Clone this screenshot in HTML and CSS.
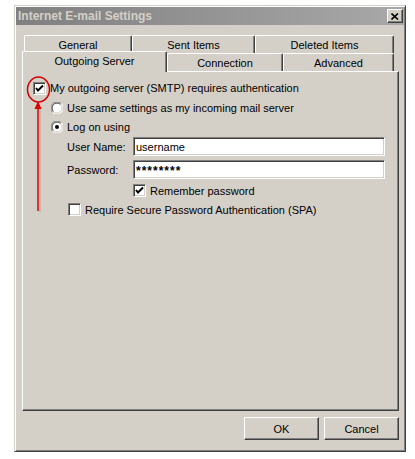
FILE: index.html
```html
<!DOCTYPE html>
<html>
<head>
  <title>Internet E-mail Settings</title>
  <link rel="stylesheet" href="styles.css">
</head>
<body>
  <div class="window">
    <div class="titlebar">
      <span class="title">Internet E-mail Settings</span>
      <span class="close-btn">
        <svg width="8" height="7" viewBox="0 0 8 7"><path d="M0.5 0.5 L7 6.5 M7 0.5 L0.5 6.5" stroke="#000" stroke-width="1.6"/></svg>
      </span>
    </div>

    <div class="dialog-body">
      <div class="tabs">
        <div class="tab-row back">
          <div class="tab tab-general">General</div>
          <div class="tab tab-sent">Sent Items</div>
          <div class="tab tab-deleted">Deleted Items</div>
        </div>
        <div class="tab-row front">
          <div class="tab tab-outgoing active">Outgoing Server</div>
          <div class="tab tab-connection">Connection</div>
          <div class="tab tab-advanced">Advanced</div>
        </div>
      </div>

      <div class="panel">
        <div class="row row-main">
          <span class="checkbox checked">
            <svg width="9" height="9" viewBox="0 0 9 9"><path d="M1 4 L3 6.5 L8 1.5" fill="none" stroke="#000" stroke-width="2"/></svg>
          </span>
          <span class="label">My outgoing server (SMTP) requires authentication</span>
        </div>

        <div class="row row-radio">
          <span class="radio">
            <svg width="12" height="12" viewBox="0 0 12 12">
              <circle cx="6" cy="6" r="5.5" fill="#fff"/>
              <path d="M1.6 10.4 A5.5 5.5 0 0 1 10.4 1.6" fill="none" stroke="#808080"/>
              <path d="M10.4 1.6 A5.5 5.5 0 0 1 1.6 10.4" fill="none" stroke="#fff"/>
              <path d="M2.5 9.5 A4.5 4.5 0 0 1 9.5 2.5" fill="none" stroke="#404040"/>
              <path d="M9.5 2.5 A4.5 4.5 0 0 1 2.5 9.5" fill="none" stroke="#d4d0c8"/>
            </svg>
          </span>
          <span class="label">Use same settings as my incoming mail server</span>
        </div>

        <div class="row row-radio">
          <span class="radio">
            <svg width="12" height="12" viewBox="0 0 12 12">
              <circle cx="6" cy="6" r="5.5" fill="#fff"/>
              <path d="M1.6 10.4 A5.5 5.5 0 0 1 10.4 1.6" fill="none" stroke="#808080"/>
              <path d="M10.4 1.6 A5.5 5.5 0 0 1 1.6 10.4" fill="none" stroke="#fff"/>
              <path d="M2.5 9.5 A4.5 4.5 0 0 1 9.5 2.5" fill="none" stroke="#404040"/>
              <path d="M9.5 2.5 A4.5 4.5 0 0 1 2.5 9.5" fill="none" stroke="#d4d0c8"/>
              <circle cx="6" cy="6" r="2" fill="#000"/>
            </svg>
          </span>
          <span class="label">Log on using</span>
        </div>

        <div class="row row-field row-user">
          <span class="field-label">User Name:</span>
          <span class="textbox">username</span>
        </div>

        <div class="row row-field row-pass">
          <span class="field-label">Password:</span>
          <span class="textbox password">********</span>
        </div>

        <div class="row row-remember">
          <span class="checkbox checked">
            <svg width="9" height="9" viewBox="0 0 9 9"><path d="M1 4 L3 6.5 L8 1.5" fill="none" stroke="#000" stroke-width="2"/></svg>
          </span>
          <span class="label">Remember password</span>
        </div>

        <div class="row row-spa">
          <span class="checkbox"></span>
          <span class="label">Require Secure Password Authentication (SPA)</span>
        </div>
      </div>

      <div class="buttons">
        <button class="btn">OK</button>
        <button class="btn">Cancel</button>
      </div>
    </div>

    <!-- red annotation drawn over the dialog -->
    <svg class="annotation" width="392" height="447" viewBox="0 0 392 447">
      <line x1="26" y1="104" x2="26" y2="207" stroke="#b8b4ac" stroke-width="1.5"/>
      <line x1="24" y1="104" x2="24" y2="206" stroke="#e00000" stroke-width="1.5"/>
      <polygon points="24,96 20.5,104 27.5,104" fill="#e00000"/>
      <ellipse cx="24.5" cy="84.5" rx="11" ry="12.5" fill="none" stroke="#d40000" stroke-width="1.5"/>
    </svg>
  </div>
</body>
</html>
```

FILE: styles.css
```css
body {
  margin: 0;
  background: #fff;
  font-family: "Liberation Sans", Arial, sans-serif;
  font-size: 11px;
  color: #000;
}

.window {
  position: relative;
  box-sizing: border-box;
  width: 392px;
  height: 447px;
  margin: 5px 0 0 14px;
  padding: 1px;
  background: #d4d0c8;
  border: 1px solid;
  border-color: #d4d0c8 #404040 #404040 #d4d0c8;
  box-shadow: inset 1px 1px #fff, inset -1px -1px #808080;
}

.titlebar {
  height: 18px;
  display: flex;
  align-items: center;
  justify-content: space-between;
  padding: 0 1px 0 2px;
  background: linear-gradient(to right, #808080, #a8a8a8);
}

.title {
  color: #d4d0c8;
  font-weight: bold;
  font-size: 12px;
}

.close-btn {
  box-sizing: border-box;
  width: 16px;
  height: 14px;
  display: flex;
  align-items: center;
  justify-content: center;
  background: #d4d0c8;
  border: 1px solid;
  border-color: #fff #404040 #404040 #fff;
  box-shadow: inset -1px -1px #808080;
}

.dialog-body {
  padding: 10px 5px 8px 6px;
}

/* tabs */
.tab-row {
  display: flex;
  height: 18px;
}

.tab-row.back {
  padding-left: 2px;
}

.tab {
  box-sizing: border-box;
  height: 18px;
  display: flex;
  align-items: center;
  justify-content: center;
  border-top: 1px solid #fff;
  border-left: 1px solid #fff;
  border-right: 1px solid #404040;
  border-radius: 2px 2px 0 0;
  box-shadow: inset -1px 0 #808080;
  background: #d4d0c8;
}

.tab-general { width: 108px; }
.tab-sent { width: 123px; }
.tab-deleted { width: 139px; }
.tab-outgoing { width: 145px; }
.tab-connection { width: 116px; }
.tab-advanced { width: 111px; }

.tab.active {
  position: relative;
  z-index: 1;
  height: 21px;
  margin-top: -2px;
  padding-bottom: 3px;
}

/* page */
.panel {
  box-sizing: border-box;
  height: 340px;
  padding: 6px 10px 0 10px;
  border: 1px solid;
  border-color: #fff #404040 #404040 #fff;
  box-shadow: inset -1px -1px #808080;
}

.row {
  display: flex;
  align-items: center;
  height: 19px;
}

.row-main { height: 20px; }
.row-radio { padding-left: 18px; }
.row-field { padding-left: 34px; }
.row-user { margin-top: 1px; }
.row-pass { margin-top: 4px; }
.row-remember { padding-left: 100px; margin-top: 2px; }
.row-spa { padding-left: 35px; }

.checkbox {
  box-sizing: border-box;
  width: 13px;
  height: 13px;
  display: flex;
  align-items: center;
  justify-content: center;
  background: #fff;
  border: 1px solid;
  border-color: #808080 #fff #fff #808080;
  box-shadow: inset 1px 1px #404040, inset -1px -1px #d4d0c8;
  margin-right: 4px;
}

.radio {
  display: flex;
  width: 12px;
  height: 12px;
  margin-right: 4px;
}

.field-label {
  width: 66px;
}

.textbox {
  box-sizing: border-box;
  width: 252px;
  height: 19px;
  display: flex;
  align-items: center;
  padding-left: 2px;
  background: #fff;
  border: 1px solid;
  border-color: #808080 #fff #fff #808080;
  box-shadow: inset 1px 1px #404040, inset -1px -1px #d4d0c8;
}

.textbox.password {
  font-size: 12px;
  font-weight: bold;
  letter-spacing: 1px;
  padding-top: 2px;
}

.buttons {
  display: flex;
  justify-content: flex-end;
  gap: 5px;
  margin-top: 6px;
}

.btn {
  box-sizing: border-box;
  width: 75px;
  height: 23px;
  padding: 0;
  font-family: "Liberation Sans", Arial, sans-serif;
  font-size: 11px;
  color: #000;
  background: #d4d0c8;
  border: 1px solid;
  border-color: #fff #404040 #404040 #fff;
  box-shadow: inset -1px -1px #808080;
}

.annotation {
  position: absolute;
  left: -1px;
  top: -1px;
  pointer-events: none;
}
```
